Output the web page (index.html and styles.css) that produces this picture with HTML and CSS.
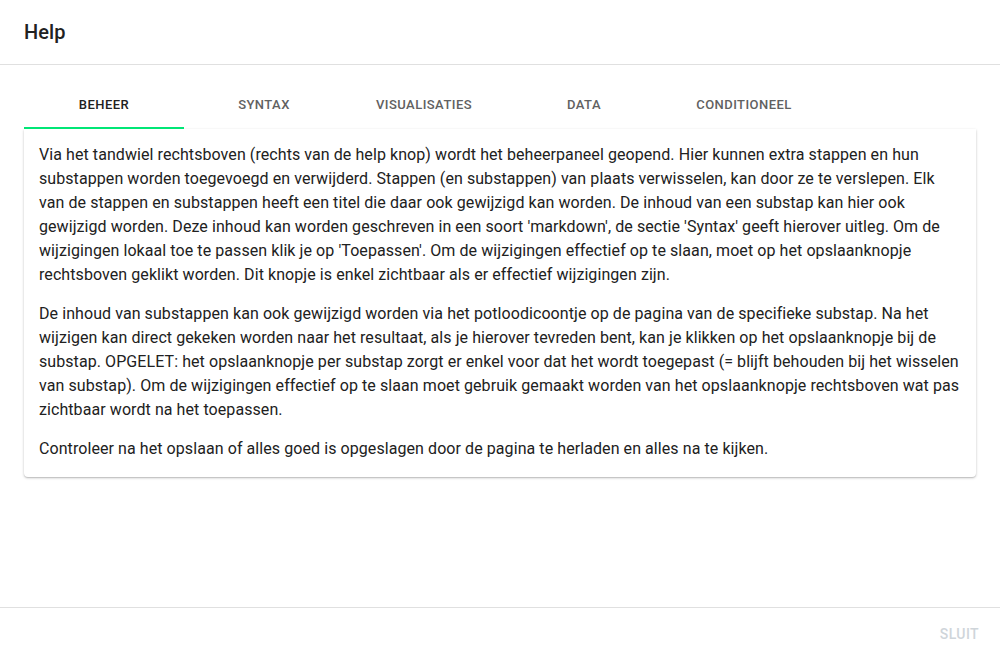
FILE: index.html
```html
<!DOCTYPE html>
<html lang="nl">
<head>
<meta charset="utf-8">
<title>Help</title>
<link rel="stylesheet" href="styles.css">
</head>
<body>
<div class="dialog">
  <header class="dialog-header">
    <h1 class="dialog-title">Help</h1>
  </header>
  <main class="dialog-body">
    <nav class="tabs">
      <div class="tab tab-active">Beheer</div>
      <div class="tab">Syntax</div>
      <div class="tab">Visualisaties</div>
      <div class="tab">Data</div>
      <div class="tab">Conditioneel</div>
    </nav>
    <section class="card">
      <p>Via het tandwiel rechtsboven (rechts van de help knop) wordt het beheerpaneel geopend. Hier kunnen extra stappen en hun substappen worden toegevoegd en verwijderd. Stappen (en substappen) van plaats verwisselen, kan door ze te verslepen. Elk van de stappen en substappen heeft een titel die daar ook gewijzigd kan worden. De inhoud van een substap kan hier ook gewijzigd worden. Deze inhoud kan worden geschreven in een soort 'markdown', de sectie 'Syntax' geeft hierover uitleg. Om de wijzigingen lokaal toe te passen klik je op 'Toepassen'. Om de wijzigingen effectief op te slaan, moet op het opslaanknopje rechtsboven geklikt worden. Dit knopje is enkel zichtbaar als er effectief wijzigingen zijn.</p>
      <p>De inhoud van substappen kan ook gewijzigd worden via het potloodicoontje op de pagina van de specifieke substap. Na het wijzigen kan direct gekeken worden naar het resultaat, als je hierover tevreden bent, kan je klikken op het opslaanknopje bij de substap. OPGELET: het opslaanknopje per substap zorgt er enkel voor dat het wordt toegepast (= blijft behouden bij het wisselen van substap). Om de wijzigingen effectief op te slaan moet gebruik gemaakt worden van het opslaanknopje rechtsboven wat pas zichtbaar wordt na het toepassen.</p>
      <p>Controleer na het opslaan of alles goed is opgeslagen door de pagina te herladen en alles na te kijken.</p>
    </section>
  </main>
  <footer class="dialog-footer">
    <button class="btn-close" disabled>Sluit</button>
  </footer>
</div>
</body>
</html>
```
FILE: styles.css
```css
* { box-sizing: border-box; }
html, body { margin: 0; padding: 0; }
body {
  font-family: Roboto, "Noto Sans", "Liberation Sans", sans-serif;
  color: #212121;
  background: #fff;
  width: 1000px;
  height: 660px;
}
.dialog {
  display: flex;
  flex-direction: column;
  height: 660px;
}
.dialog-header {
  height: 65px;
  border-bottom: 1px solid #e0e0e0;
  padding: 0 24px;
  display: flex;
  align-items: center;
}
.dialog-title {
  margin: 0;
  font-size: 20px;
  font-weight: 500;
  letter-spacing: 0.1px;
  color: #212121;
}
.dialog-body {
  flex: 1;
  padding: 16px 24px 0;
}
.tabs {
  display: flex;
  height: 48px;
}
.tab {
  width: 160px;
  display: flex;
  align-items: center;
  justify-content: center;
  text-transform: uppercase;
  font-size: 13px;
  font-weight: 500;
  letter-spacing: 0.45px;
  color: #616161;
  border-bottom: 2px solid transparent;
  padding-top: 1px;
}
.tab-active {
  color: #212121;
  border-bottom-color: #00e676;
}
.card {
  background: #fff;
  border-radius: 0 0 4px 4px;
  box-shadow: 0 1px 3px rgba(0,0,0,0.2), 0 1px 1px rgba(0,0,0,0.12);
  padding: 14px 15px 16px;
  font-size: 16px;
  line-height: 24px;
  letter-spacing: 0.075px;
  color: #212121;
}
.card p {
  margin: 0 0 15px;
}
.card p:last-child { margin-bottom: 0; }
.dialog-footer {
  height: 53px;
  border-top: 1px solid #e0e0e0;
  display: flex;
  align-items: center;
  justify-content: flex-end;
  padding: 0 13px;
}
.btn-close {
  background: none;
  border: none;
  font-family: Roboto, "Noto Sans", "Liberation Sans", sans-serif;
  font-size: 14px;
  font-weight: 500;
  letter-spacing: 0.4px;
  text-transform: uppercase;
  color: #cfd5da;
  padding: 8px 8px;
}
```
